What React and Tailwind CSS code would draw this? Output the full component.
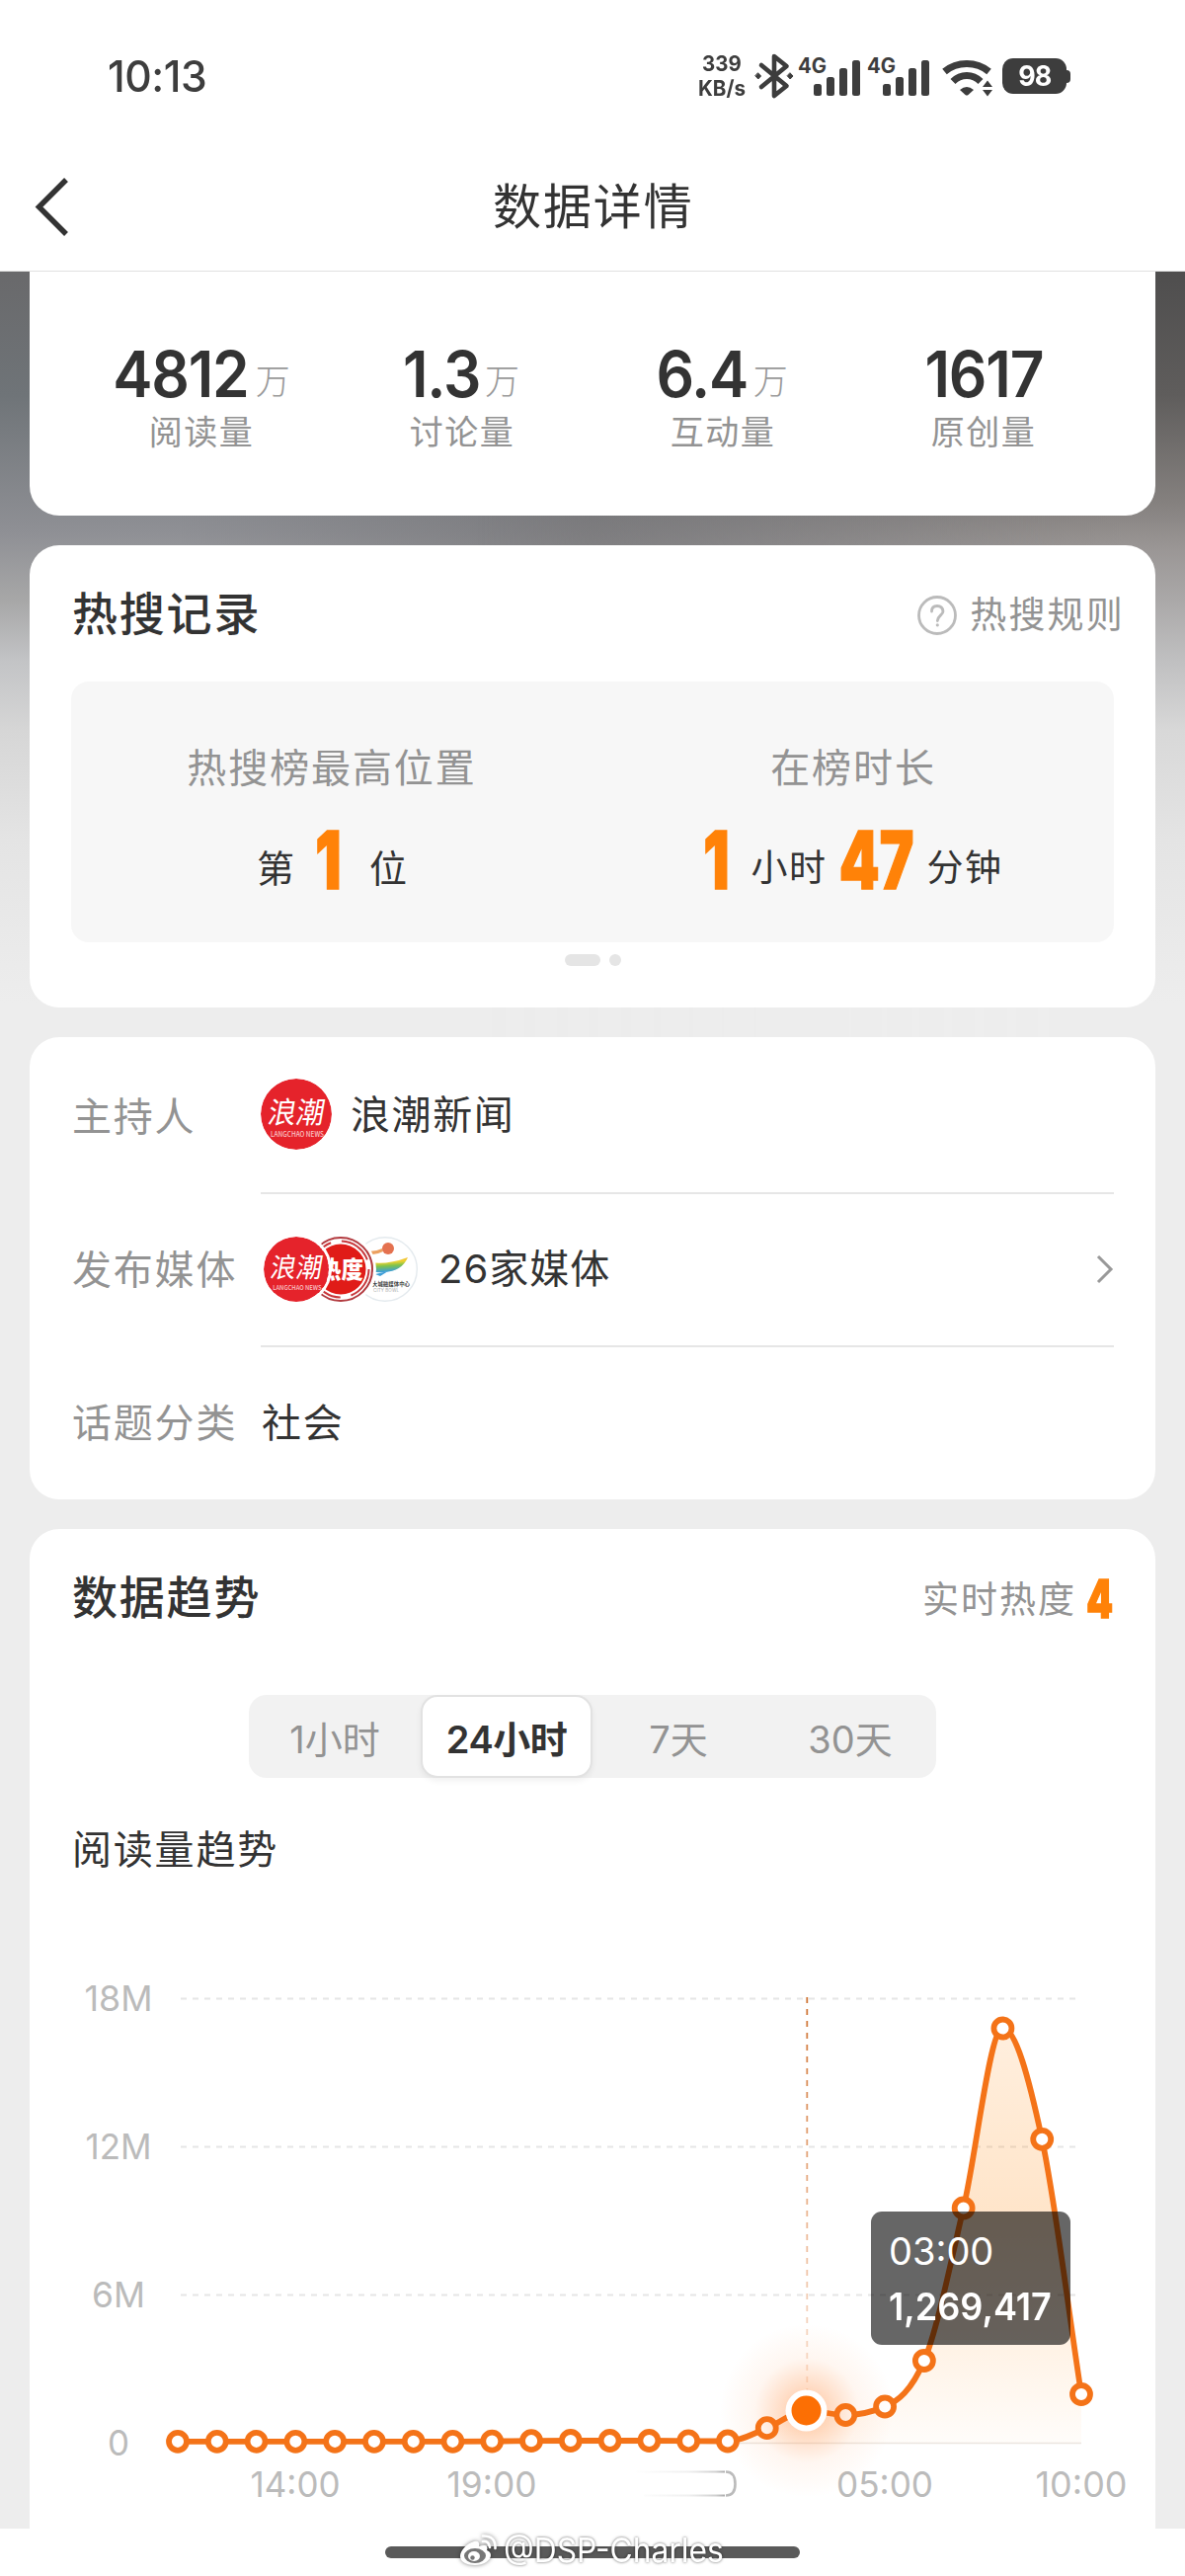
import React from 'react';

const CJK = "font-['Noto_Sans_CJK_SC',sans-serif]";
const LATIN = "font-['Inter','Noto_Sans_CJK_SC',sans-serif]";

const STATS = [
  { value: '4812', unit: '万', label: '阅读量' },
  { value: '1.3', unit: '万', label: '讨论量' },
  { value: '6.4', unit: '万', label: '互动量' },
  { value: '1617', unit: '', label: '原创量' },
];

const RANGES = ['1小时', '24小时', '7天', '30天'];

/* Chart points in the local space of the 1140x600 chart canvas. */
const X0 = 150;
const STEP = 915 / 23;
const YS = [
  511.8, 511.8, 511.8, 511.8, 511.8, 511.8, 511.8, 511.8, 511.6, 511.2, 511,
  511, 511, 511.3, 511.5, 498.2, 480.5, 485, 476.5, 430, 275.5, 93.5, 205.8,
  464,
];
const POINTS = YS.map((y, i) => [X0 + i * STEP, y]);

function monotonePath(pts) {
  const n = pts.length;
  const d = [];
  for (let i = 0; i < n - 1; i++) {
    d.push((pts[i + 1][1] - pts[i][1]) / (pts[i + 1][0] - pts[i][0]));
  }
  const m = pts.map((_, i) => {
    if (i === 0) return d[0];
    if (i === n - 1) return d[n - 2];
    const a = d[i - 1];
    const b = d[i];
    if (a * b <= 0) return 0;
    return Math.sign(a) * Math.min(Math.abs(a), Math.abs(b), 0.5 * Math.abs((a + b) / 2)) * 2;
  });
  let s = `M${pts[0][0]} ${pts[0][1]}`;
  for (let i = 0; i < n - 1; i++) {
    const h = (pts[i + 1][0] - pts[i][0]) / 3;
    s += `C${pts[i][0] + h} ${pts[i][1] + m[i] * h} ${pts[i + 1][0] - h} ${pts[i + 1][1] - m[i + 1] * h} ${pts[i + 1][0]} ${pts[i + 1][1]}`;
  }
  return s;
}

const LINE = monotonePath(POINTS);

function Signal() {
  return (
    <svg width="64" height="50" viewBox="0 -4 64 50" className={LATIN}>
      <text x="0" y="17.5" fontSize="21" fontWeight="700" fill="#3d3d3d" textLength="29" lengthAdjust="spacingAndGlyphs">4G</text>
      <g fill="#3d3d3d">
        <rect x="16" y="29" width="8" height="12" rx="2.5" />
        <rect x="29" y="22" width="8" height="19" rx="2.5" />
        <rect x="42" y="13" width="8" height="28" rx="2.5" />
        <rect x="55" y="5" width="8" height="36" rx="2.5" />
      </g>
    </svg>
  );
}

function StatusBar() {
  return (
    <div className="flex h-[154px] items-center justify-between pr-[116px] pl-[109px]">
      <div className={`${LATIN} w-[110px] origin-left scale-x-[0.97] text-[44px] leading-none font-medium tracking-[-0.5px] text-[#3d3d3d]`}>
        10:13
      </div>
      <div className="flex items-center">
        <div className={`${LATIN} flex w-[48px] flex-col items-center text-[21.5px] leading-[25px] font-bold text-[#3d3d3d]`}>
          <span className="scale-x-[0.95]">339</span>
          <span className="scale-x-[0.96]">KB/s</span>
        </div>
        <svg width="40" height="48" viewBox="0 0 40 48" className="ml-[9px]" fill="none" stroke="#3d3d3d" strokeWidth="4.6" strokeLinejoin="round" strokeLinecap="round">
          <path d="M7 13L32.5 34L20 44V4L32.5 14L7 35" />
          <path d="M3.8 21L6.6 24L3.8 27L1 24ZM36.2 21L39 24L36.2 27L33.4 24Z" fill="#3d3d3d" strokeWidth="1" />
        </svg>
        <div className="ml-[4px] flex gap-[6px]">
          <Signal />
          <Signal />
        </div>
        <svg width="52" height="42" viewBox="0 0 52 42" className="ml-[12px]">
          <g fill="none" stroke="#3d3d3d" strokeWidth="7">
            <path d="M2.5 16.5Q12 8.5 25 8.5T47.5 16.5" />
            <path d="M11 26.5Q17 20.5 25 20.5T39 26.5" />
          </g>
          <path d="M18 35Q25 29 32 35L26.5 40Q25 41 23.5 40Z" fill="#3d3d3d" />
          <path d="M41 32L46 25.5L51 32ZM41 35L46 41.5L51 35Z" fill="#3d3d3d" />
        </svg>
        <div className="ml-[9px] flex items-center">
          <div className={`${LATIN} flex h-[36px] w-[65px] items-center justify-center rounded-[11px] bg-[#3d3d3d] text-[29px] font-bold tracking-[-1px] text-white`}>
            <span className="scale-x-[0.93]">98</span>
          </div>
          <div className="h-[13px] w-[4px] rounded-r-[4px] bg-[#3d3d3d]" />
        </div>
      </div>
    </div>
  );
}

function Header() {
  return (
    <header className="h-[275px] border-b border-[#e0e0e0] bg-white">
      <StatusBar />
      <div className="flex h-[110px] items-center">
        <svg width="40" height="66" viewBox="0 0 40 66" className="ml-[34px]" fill="none" stroke="#333" strokeWidth="5.5">
          <path d="M33 6L5.5 33.5L33 61" />
        </svg>
        <h1 className={`${CJK} mb-[7px] ml-[425px] text-[49px] leading-none tracking-[1.9px] text-[#333]`}>数据详情</h1>
      </div>
    </header>
  );
}

function Heavy({ children, className = '' }) {
  return (
    <span
      className={`${LATIN} flex shrink-0 items-center justify-center leading-none font-black tracking-normal text-[#ff8208] ${className}`}
    >
      <span className="shrink-0 scale-x-[0.72] [-webkit-text-stroke:1.5px_#ff8208]">{children}</span>
    </span>
  );
}

function WaveLogo({ size }) {
  return (
    <svg width={size} height={size} viewBox="0 0 72 72" className="rounded-full">
      <circle cx="36" cy="36" r="36" fill="#e5232b" />
      <g className={CJK} fill="#fff">
        <text x="14" y="45" fontSize="30" fontWeight="400" textLength="57" lengthAdjust="spacingAndGlyphs" transform="skewX(-10)">浪潮</text>
        <text x="10" y="58.5" fontSize="7.2" fontWeight="500" textLength="54" lengthAdjust="spacingAndGlyphs" fill="#f9c4c6">LANGCHAO NEWS</text>
      </g>
    </svg>
  );
}

function HeatLogo() {
  return (
    <svg width="66" height="66" viewBox="0 0 66 66">
      <circle cx="33" cy="33" r="32" fill="#fff" stroke="#b23a3f" strokeWidth="2" />
      <circle cx="33" cy="33" r="28.5" fill="none" stroke="#c8383c" strokeWidth="2" strokeDasharray="34 11" />
      <circle cx="33" cy="33" r="25.5" fill="#e01c18" />
      <text x="11" y="42" fontSize="24" fontWeight="900" fill="#fff" className={CJK} textLength="45" lengthAdjust="spacingAndGlyphs">热度</text>
    </svg>
  );
}

function RibbonLogo() {
  return (
    <svg width="66" height="66" viewBox="0 0 66 66">
      <defs>
        <linearGradient id="ribbon" x1="0" y1="0" x2="0.2" y2="1">
          <stop offset="0" stopColor="#f3a33a" />
          <stop offset="0.4" stopColor="#efd22f" />
          <stop offset="0.65" stopColor="#7cc24c" />
          <stop offset="1" stopColor="#3f9fd8" />
        </linearGradient>
      </defs>
      <circle cx="33" cy="33" r="32.3" fill="#fff" stroke="#e4eaee" strokeWidth="1.4" />
      <path d="M12 14Q22 16 30 12L31 15Q22 20 11 17Z" fill="#eca05f" />
      <circle cx="36" cy="12" r="6" fill="#e4714f" />
      <path d="M12 25Q32 30 56 21Q50 35 32 36Q22 37 16 34Z" fill="url(#ribbon)" />
      <path d="M23 38L36 35L28 40Z" fill="#3f9fd8" />
      <text x="20" y="50" fontSize="5.4" fontWeight="700" fill="#444" className={CJK} textLength="38">大城融媒体中心</text>
      <text x="21" y="56" fontSize="4.5" fill="#aaa" className={LATIN} textLength="26">CITY BOWL</text>
    </svg>
  );
}

function InfoRow({ label, divider, children }) {
  return (
    <div className="flex h-[155px] items-stretch">
      <div className={`${CJK} flex w-[192px] items-center pb-[8px] pl-[1px] text-[40px] tracking-[1.8px] text-[#939393]`}>{label}</div>
      <div className={`flex flex-1 items-center ${divider ? 'border-b-2 border-[#e6e6e6]' : ''}`}>{children}</div>
    </div>
  );
}

function Chart() {
  const axis = { fontSize: 36, fill: '#bbb', textAnchor: 'middle', lengthAdjust: 'spacingAndGlyphs' };
  return (
    <svg width="1140" height="600" viewBox="0 0 1140 600" className={LATIN}>
      <defs>
        <linearGradient id="area" x1="0" y1="93" x2="0" y2="513" gradientUnits="userSpaceOnUse">
          <stop offset="0" stopColor="#ff8200" stopOpacity="0.13" />
          <stop offset="0.45" stopColor="#ff8200" stopOpacity="0.21" />
          <stop offset="1" stopColor="#ff8200" stopOpacity="0.02" />
        </linearGradient>
        <linearGradient id="marker" x1="0" y1="62" x2="0" y2="470" gradientUnits="userSpaceOnUse">
          <stop offset="0" stopColor="#cf7434" />
          <stop offset="0.55" stopColor="#ebb794" />
          <stop offset="1" stopColor="#fae6da" />
        </linearGradient>
        <radialGradient id="glow">
          <stop offset="0" stopColor="#ff7010" stopOpacity="0.42" />
          <stop offset="0.3" stopColor="#ff7010" stopOpacity="0.23" />
          <stop offset="0.6" stopColor="#ff7010" stopOpacity="0.06" />
          <stop offset="1" stopColor="#ff7010" stopOpacity="0" />
        </radialGradient>
        <linearGradient id="streak">
          <stop offset="0" stopColor="#ccc" stopOpacity="0" />
          <stop offset="0.6" stopColor="#ccc" stopOpacity="0.3" />
          <stop offset="0.9" stopColor="#c4c4c4" stopOpacity="0.8" />
          <stop offset="1" stopColor="#aaa" />
        </linearGradient>
      </defs>
      {[63.5, 213.5, 363.5].map((y) => (
        <line key={y} x1="153" x2="1065" y1={y} y2={y} stroke="#e6e6e6" strokeWidth="1.8" strokeDasharray="6 6" />
      ))}
      <line x1="150" x2="1065" y1="513.5" y2="513.5" stroke="#ebe5e0" strokeWidth="1.4" />
      <text x="90" y="76" {...axis} textLength="69">18M</text>
      <text x="90" y="226" {...axis} textLength="67">12M</text>
      <text x="90" y="376" {...axis} textLength="54">6M</text>
      <text x="90" y="525.5" {...axis} textLength="22">0</text>
      <text x="269" y="567.5" {...axis} textLength="91">14:00</text>
      <text x="468" y="567.5" {...axis} textLength="91">19:00</text>
      <text x="866" y="567.5" {...axis} textLength="98">05:00</text>
      <text x="1065" y="567.5" {...axis} textLength="93">10:00</text>
      <path d="M612 541.5H704V543.5H612ZM622 565.5H704V567.5H622Z" fill="url(#streak)" />
      <path d="M705 542.5C713 542.5 714.5 550 714.5 555S713 566.5 705 566.5" fill="none" stroke="#bbb" strokeWidth="2.6" />
      <path d={`${LINE}L1065 513L150 513Z`} fill="url(#area)" />
      <line x1="787.3" x2="787.3" y1="62" y2="470" stroke="url(#marker)" strokeWidth="1.8" strokeDasharray="6 6" />
      <path d={LINE} fill="none" stroke="#f47318" strokeWidth="5.8" />
      {POINTS.map(([x, y], i) =>
        i === 16 ? null : <circle key={i} cx={x} cy={y} r="9" fill="#fff" stroke="#f47318" strokeWidth="5.8" />
      )}
      <circle cx="787" cy="480.5" r="88" fill="url(#glow)" />
      <circle cx={POINTS[16][0]} cy="480.5" r="21" fill="#fff" />
      <circle cx={POINTS[16][0]} cy="480.5" r="15" fill="#fc6f04" />
    </svg>
  );
}

function WeiboMark() {
  return (
    <svg width="38" height="34" viewBox="0 0 38 34" className="drop-shadow-[0_0_2px_rgba(0,0,0,0.5)]">
      <path d="M15 8C8 10 1 17 1 23C1 29 8 32 16 32C25 32 32 27 32 22C32 19 30 18 28 17C30 12 26 11 20 13C21 9 19 7 15 8Z" fill="#fff" />
      <ellipse cx="16" cy="22.5" rx="11" ry="7.5" fill="#777" />
      <ellipse cx="15" cy="23" rx="6" ry="5" fill="#fff" />
      <circle cx="13.5" cy="24.5" r="2.2" fill="#777" />
      <path d="M24 8Q30 7 31 14M24 2.5Q37 2 36.5 15" fill="none" stroke="#fff" strokeWidth="2.6" strokeLinecap="round" />
    </svg>
  );
}

export default function App() {
  return (
    <div className={`${CJK} relative flex h-[2608px] w-[1200px] flex-col overflow-hidden bg-[#ededed]`}>
      <Header />
      <div className="relative flex h-[2285px] flex-col gap-[30px] px-[30px]">
        <div className="absolute inset-x-0 top-0 h-[800px] bg-[linear-gradient(180deg,#69696b_0px,#6f7478_125px,#8f9095_265px,#a8a8a8_335px,#c3c4c6_395px,#d6d6d6_465px,#e4e4e4_575px,#ededed_740px)]" />
        <div className="absolute inset-x-0 top-0 h-[800px] bg-[linear-gradient(180deg,#4f4e4e_0px,#5f5d5c_125px,#85817f_235px,#9a9695_280px,#aba9a9_335px,#c0c0c1_395px,#d8d8d8_465px,#e4e4e4_575px,#ededed_740px)] [mask-image:linear-gradient(90deg,transparent_40%,black_90%)]" />
        <div className="absolute inset-x-0 top-[240px] h-[44px] bg-[linear-gradient(90deg,transparent_15%,rgba(90,88,88,0.34)_50%,transparent_95%)]" />

        <section className="relative flex h-[247px] rounded-b-[30px] bg-white px-[42px] pt-[72px]">
          {STATS.map((s) => (
            <div key={s.label} className="flex w-[264px] flex-col items-center">
              <div className="flex h-[64px] items-center justify-center">
                <span
                  className={`${LATIN} -mx-[5px] scale-x-[0.93] text-[65px] leading-[64px] font-semibold tracking-[-1.3px] text-[#333]`}
                >
                  {s.value}
                </span>
                {s.unit && <span className="ml-[7px] pt-[9px] text-[35px] leading-none font-light text-[#999]">{s.unit}</span>}
              </div>
              <div className="mt-[7px] text-[34px] leading-[36px] tracking-[1.5px] text-[#939393]">{s.label}</div>
            </div>
          ))}
        </section>

        <section className="relative h-[468px] rounded-[30px] bg-white px-[42px]">
          <div className="flex h-[138px] items-center justify-between pb-[3px]">
            <h2 className="pb-[3px] pl-[1px] text-[46px] leading-none font-medium tracking-[1.8px] text-[#333]">热搜记录</h2>
            <div className="-mr-[11px] flex items-center gap-[14px] pt-[1px]">
              <svg width="42" height="42" viewBox="0 0 42 42" fill="none" stroke="#bbb" strokeWidth="2.8" className="-mr-[2px] mt-[5px]">
                <circle cx="21" cy="21" r="18.5" />
                <path d="M15.5 17Q15.5 11.5 21 11.5T27 17C27 20.5 21.3 21.5 21.3 26.5" strokeLinecap="round" />
                <circle cx="21.3" cy="30.8" r="0.8" fill="#bbb" strokeWidth="1.6" />
              </svg>
              <span className="text-[37px] leading-none tracking-[2.2px] text-[#939393]">热搜规则</span>
            </div>
          </div>
          <div className="grid h-[264px] grid-cols-2 rounded-[18px] bg-[#f7f7f7]">
            <div className="flex flex-col items-center pt-[64px]">
              <div className="text-[40px] leading-[42px] tracking-[1.9px] text-[#939393]">热搜榜最高位置</div>
              <div className="mt-[39px] flex h-[72px] items-center text-[38px] text-[#333]">
                <span className="pt-[11px] leading-none">第</span>
                <Heavy className="w-[76px] pr-[8px] text-[81px]">1</Heavy>
                <span className="pt-[11px] leading-none">位</span>
              </div>
            </div>
            <div className="flex flex-col items-center pt-[64px]">
              <div className="text-[40px] leading-[42px] tracking-[1.9px] text-[#939393]">在榜时长</div>
              <div className="mt-[39px] flex h-[72px] items-center text-[37px] tracking-[1.5px] text-[#333]">
                <Heavy className="w-[48px] pr-[22px] text-[81px]">1</Heavy>
                <span className="pt-[11px] leading-none">小时</span>
                <Heavy className="w-[101px] text-[81px]">47</Heavy>
                <span className="pt-[11px] leading-none">分钟</span>
              </div>
            </div>
          </div>
          <div className="mt-[12px] flex justify-center gap-[9px]">
            <div className="h-[12px] w-[36px] rounded-full bg-[#e5e5e5]" />
            <div className="h-[12px] w-[12px] rounded-full bg-[#e5e5e5]" />
          </div>
        </section>

        <section className="relative h-[468px] rounded-[30px] bg-white px-[42px] pt-[4px]">
          <InfoRow label="主持人" divider>
            <div className="-mt-[5px] flex items-center">
              <WaveLogo size={72} />
              <span className="mb-[4px] ml-[19px] text-[40px] leading-none tracking-[1.6px] text-[#333]">浪潮新闻</span>
            </div>
          </InfoRow>
          <InfoRow label="发布媒体" divider>
            <div className="-mt-[2px] flex flex-1 items-center">
              <div className="ml-[3px] flex items-center">
                <div className="relative z-20 h-[66px] rounded-full shadow-[0_0_0_3px_white]"><WaveLogo size={66} /></div>
                <div className="relative z-10 -ml-[21px] h-[66px] rounded-full shadow-[0_0_0_3px_white]"><HeatLogo /></div>
                <div className="-ml-[21px]"><RibbonLogo /></div>
              </div>
              <span className={`${LATIN} ml-[21px] text-[40px] leading-none tracking-[1px] text-[#333]`}>26家媒体</span>
              <svg width="20" height="34" viewBox="0 0 20 34" className="ml-auto" fill="none" stroke="#999" strokeWidth="3">
                <path d="M4 4L17 17L4 30" />
              </svg>
            </div>
          </InfoRow>
          <InfoRow label="话题分类">
            <span className="pb-[8px] pl-[1px] text-[40px] leading-none tracking-[1.8px] text-[#333]">社会</span>
          </InfoRow>
        </section>

        <section className="relative h-[1012px] rounded-t-[30px] bg-white">
          <div className="flex h-[140px] items-center justify-between px-[42px]">
            <h2 className="pb-[8px] pl-[1px] text-[46px] leading-none font-medium tracking-[1.8px] text-[#333]">数据趋势</h2>
            <div className="flex items-center">
              <span className="pb-[2px] text-[37px] leading-none tracking-[2px] text-[#939393]">实时热度</span>
              <Heavy className="mt-[3px] ml-[9px] w-[29px] text-[53px]">4</Heavy>
            </div>
          </div>
          <div className={`${LATIN} mx-auto mt-[28px] flex h-[84px] w-[696px] rounded-[18px] bg-[#f2f2f2] text-[38px] text-[#939393]`}>
            {RANGES.map((r, i) => (
              <div
                key={r}
                className={
                  i === 1
                    ? 'flex w-[174px] items-center justify-center rounded-[17px] border-2 border-[#e2e2e2] bg-white pt-[6px] font-semibold tracking-[-0.5px] text-[#333] shadow-[0_3px_6px_rgba(0,0,0,0.06)]'
                    : 'flex w-[174px] items-center justify-center pt-[6px]'
                }
              >
                {r}
              </div>
            ))}
          </div>
          <div className="mt-[48px] ml-[43px] text-[40px] leading-[44px] tracking-[1.8px] text-[#333]">阅读量趋势</div>
          <div className="relative mt-[68px]">
            <Chart />
            <div
              className={`${LATIN} absolute top-[279px] left-[852px] h-[135px] w-[202px] rounded-[11px] bg-black/60 pt-[12px] pl-[18px] text-[38px] leading-[56px] text-white`}
            >
              <div>03:00</div>
              <div className="origin-left scale-x-[0.95] font-semibold">1,269,417</div>
            </div>
          </div>
        </section>
      </div>

      <footer className="relative flex h-[48px] items-center justify-center bg-white">
        <div className="h-[12px] w-[420px] rounded-full bg-[#5a5a5a]" />
        <div className="absolute top-[3px] left-[465px] flex items-center">
          <WeiboMark />
          <span className={`${LATIN} ml-[7px] origin-left scale-x-[0.935] text-[34px] leading-[38px] whitespace-nowrap text-white [text-shadow:0_0_3px_rgba(0,0,0,0.65)]`}>
            @DSP-Charles
          </span>
        </div>
      </footer>
    </div>
  );
}
